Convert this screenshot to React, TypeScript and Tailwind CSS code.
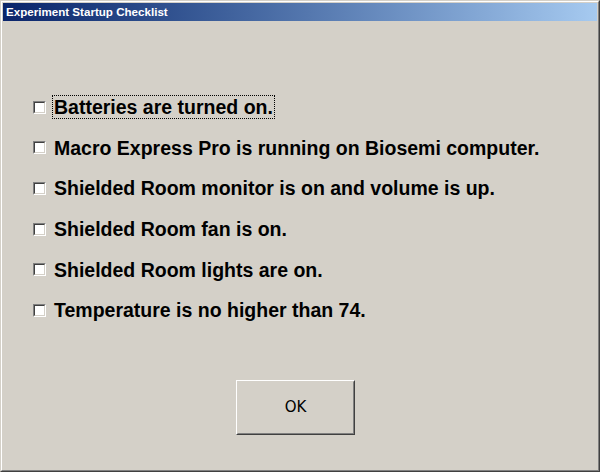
import React, { useState } from 'react';

const items = [
  'Batteries are turned on.',
  'Macro Express Pro is running on Biosemi computer.',
  'Shielded Room monitor is on and volume is up.',
  'Shielded Room fan is on.',
  'Shielded Room lights are on.',
  'Temperature is no higher than 74.',
];

export default function App() {
  const [checked, setChecked] = useState<boolean[]>(items.map(() => false));

  return (
    <div className="w-[600px] h-[472px] border border-t-[#d4d0c8] border-l-[#d4d0c8] border-b-[#404040] border-r-[#404040] bg-[#d4d0c8]">
      <div className="h-full flex flex-col border border-t-white border-l-white border-b-[#808080] border-r-[#808080] p-px">
        {/* title bar */}
        <div className="h-[18px] flex items-center px-[3px] bg-gradient-to-r from-[#0a246a] to-[#a6caf0]">
          <span className="text-white text-[11.6px] font-bold font-['Liberation_Sans',sans-serif] leading-none">
            Experiment Startup Checklist
          </span>
        </div>

        {/* checklist */}
        <div className="flex flex-col pt-[66px] pl-[30px]">
          {items.map((label, i) => (
            <div key={label} className="h-[40.6px] flex items-center">
              <button
                onClick={() => setChecked(c => c.map((v, j) => (j === i ? !v : v)))}
                className="w-[13px] h-[13px] border border-t-[#808080] border-l-[#808080] border-b-white border-r-white"
              >
                <div className="w-full h-full border border-t-[#404040] border-l-[#404040] border-b-[#d4d0c8] border-r-[#d4d0c8] bg-white flex items-center justify-center text-[9px] leading-none">
                  {checked[i] ? '✓' : ''}
                </div>
              </button>
              <span
                className={
                  'ml-[6px] px-px py-px text-[19.5px] font-bold text-black leading-[20px] font-["Liberation_Sans",Arial,sans-serif] border border-dotted ' +
                  (i === 0 ? 'border-black' : 'border-transparent')
                }
              >
                {label}
              </span>
            </div>
          ))}
        </div>

        {/* OK button */}
        <div className="flex mt-[49px] ml-[233px]">
          <button className="w-[119px] h-[55px] border border-t-white border-l-white border-b-[#404040] border-r-[#404040]">
            <div className="w-full h-full border border-t-[#d4d0c8] border-l-[#d4d0c8] border-b-[#808080] border-r-[#808080] flex items-center justify-center text-[15px] text-black font-['DejaVu_Sans',sans-serif]">
              OK
            </div>
          </button>
        </div>
      </div>
    </div>
  );
}
